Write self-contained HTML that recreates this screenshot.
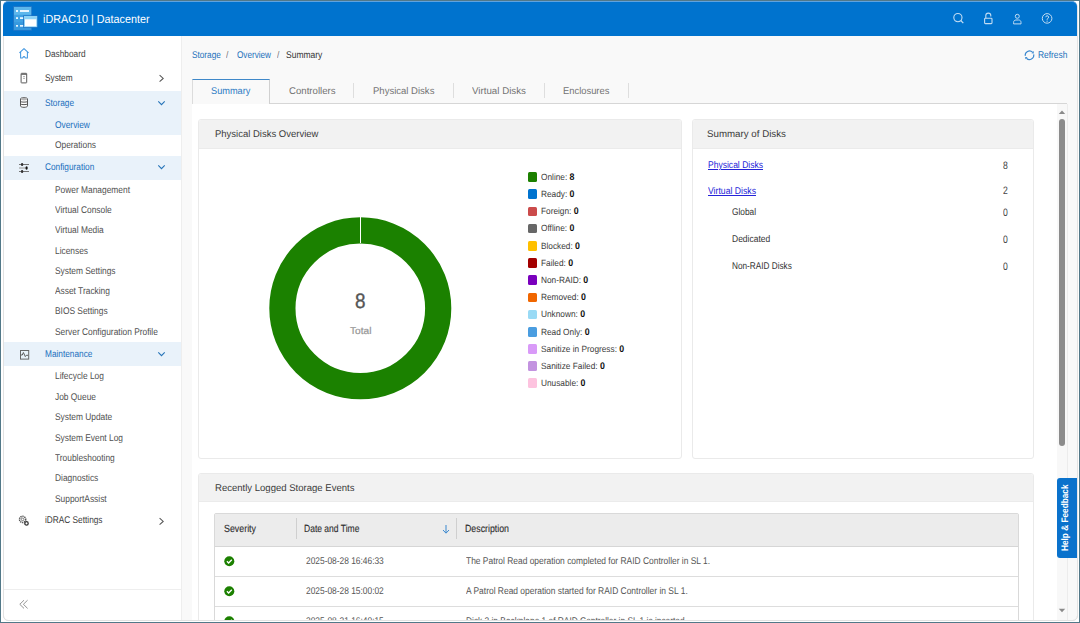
<!DOCTYPE html><html><head><meta charset="utf-8"><style>
*{margin:0;padding:0;box-sizing:border-box}
html,body{width:1080px;height:623px;overflow:hidden;background:#527888;font-family:"Liberation Sans", sans-serif;position:relative}
.a{position:absolute}
.t{position:absolute;white-space:nowrap;transform-origin:0 0;text-rendering:geometricPrecision}
</style></head><body><div class="a" style="left:1px;top:1px;width:1078px;height:621px;background:#fff;"></div>
<div class="a" style="left:0;top:0;width:1080px;height:620px;overflow:hidden">
<div class="a" style="left:3px;top:2px;width:1075px;height:619px;background:#f9f9f9;border:1px solid #e4e4e4;border-radius:5px;overflow:hidden"></div>
<div class="a" style="left:3px;top:1px;width:1074px;height:35px;background:#0073ce;border-radius:5px 5px 0 0;border-top:1px solid #5fa3df"></div>
<svg class="a" style="left:13px;top:6px" width="25" height="25" viewBox="0 0 25 25">
<rect x="0.6" y="0.6" width="18" height="23.6" fill="#3598de" stroke="#2276c6" stroke-width="0.9"/>
<rect x="1" y="1" width="17.2" height="7.9" fill="#5db7ec"/>
<rect x="1" y="8.9" width="17.2" height="7.6" fill="#3fa2e4"/>
<rect x="1" y="16.5" width="17.2" height="7.4" fill="#3699de"/>
<rect x="3" y="4" width="2" height="2" fill="#e6f5ff"/>
<rect x="7" y="4" width="9" height="2" fill="#e6f5ff"/>
<rect x="3" y="11.2" width="2" height="1.8" fill="#e6f5ff"/>
<rect x="7" y="11.2" width="4" height="1.8" fill="#e6f5ff"/>
<rect x="3" y="19" width="2" height="1.7" fill="#e6f5ff"/>
<rect x="7" y="19" width="4" height="1.7" fill="#e6f5ff"/>
<rect x="10.2" y="9.4" width="14.4" height="12.4" fill="#1f71c3"/>
<rect x="11" y="10" width="13.2" height="11.1" fill="#8ed3f6"/>
<rect x="12" y="13.3" width="11.3" height="7" fill="#ffffff"/>
</svg>
<div class="t" style="left:43.20px;top:13.71px;font-size:11.8px;line-height:11.8px;color:#fff;transform:scaleX(0.9140);font-weight:normal;">iDRAC10 | Datacenter</div>
<svg class="a" style="left:952px;top:12px" width="13" height="13" viewBox="0 0 13 13"><circle cx="5.9" cy="5.6" r="4.1" fill="none" stroke="#c2dcf3" stroke-width="1.1"/><path d="M8.8 8.5 L11.3 11.2" stroke="#c2dcf3" stroke-width="1.2"/></svg>
<svg class="a" style="left:982px;top:11px" width="12" height="14" viewBox="0 0 12 14"><rect x="2.6" y="7.2" width="7.4" height="5.4" rx="0.8" fill="none" stroke="#c2dcf3" stroke-width="1.1"/><path d="M3.8 7.2 V4.6 A2.5 2.5 0 0 1 8.8 4.6 V5.4" fill="none" stroke="#c2dcf3" stroke-width="1.1"/></svg>
<svg class="a" style="left:1011px;top:11px" width="13" height="14" viewBox="0 0 13 14"><circle cx="6.3" cy="5.3" r="2" fill="none" stroke="#c2dcf3" stroke-width="1"/><path d="M2.6 12.9 V11.4 C2.6 9.9 3.6 9 5 9 H7.6 C9 9 10 9.9 10 11.4 V12.9 Z" fill="none" stroke="#c2dcf3" stroke-width="1"/></svg>
<svg class="a" style="left:1040px;top:11px" width="14" height="14" viewBox="0 0 14 14"><circle cx="7.1" cy="7.4" r="4.8" fill="none" stroke="#c2dcf3" stroke-width="1"/><path d="M5.8 6.2 A1.4 1.4 0 1 1 7.6 7.5 C7.2 7.8 7.1 8.1 7.1 8.8" fill="none" stroke="#c2dcf3" stroke-width="1"/><circle cx="7.1" cy="10.2" r="0.6" fill="#c2dcf3"/></svg>
<div class="a" style="left:3px;top:36px;width:179px;height:585px;background:#fff;border-left:1px solid #e2e2e2;border-right:1px solid #eeeeee;border-bottom:1px solid #e4e4e4;border-radius:0 0 0 5px"></div>
<div class="a" style="left:4px;top:91px;width:177px;height:44px;background:#e9f2fa;"></div>
<div class="a" style="left:4px;top:155.5px;width:177px;height:24px;background:#e9f2fa;"></div>
<div class="a" style="left:4px;top:342px;width:177px;height:24px;background:#e9f2fa;"></div>
<div class="a" style="left:4px;top:589px;width:177px;height:1px;background:#eeeeee;"></div>
<div class="t" style="left:45.00px;top:49.60px;font-size:9.8px;line-height:9.8px;color:#3c3c3c;transform:scaleX(0.8450);font-weight:normal;">Dashboard</div>
<div class="t" style="left:45.00px;top:73.90px;font-size:9.8px;line-height:9.8px;color:#3c3c3c;transform:scaleX(0.8450);font-weight:normal;">System</div>
<div class="t" style="left:45.00px;top:98.90px;font-size:9.8px;line-height:9.8px;color:#1a6fbd;transform:scaleX(0.8450);font-weight:normal;">Storage</div>
<div class="t" style="left:55.00px;top:120.90px;font-size:9.8px;line-height:9.8px;color:#1a6fbd;transform:scaleX(0.8550);font-weight:normal;">Overview</div>
<div class="t" style="left:55.00px;top:140.90px;font-size:9.8px;line-height:9.8px;color:#505050;transform:scaleX(0.8550);font-weight:normal;">Operations</div>
<div class="t" style="left:45.00px;top:163.40px;font-size:9.8px;line-height:9.8px;color:#1a6fbd;transform:scaleX(0.8450);font-weight:normal;">Configuration</div>
<div class="t" style="left:55.00px;top:185.60px;font-size:9.8px;line-height:9.8px;color:#505050;transform:scaleX(0.8550);font-weight:normal;">Power Management</div>
<div class="t" style="left:55.00px;top:206.30px;font-size:9.8px;line-height:9.8px;color:#505050;transform:scaleX(0.8550);font-weight:normal;">Virtual Console</div>
<div class="t" style="left:55.00px;top:226.20px;font-size:9.8px;line-height:9.8px;color:#505050;transform:scaleX(0.8550);font-weight:normal;">Virtual Media</div>
<div class="t" style="left:55.00px;top:246.50px;font-size:9.8px;line-height:9.8px;color:#505050;transform:scaleX(0.8550);font-weight:normal;">Licenses</div>
<div class="t" style="left:55.00px;top:267.20px;font-size:9.8px;line-height:9.8px;color:#505050;transform:scaleX(0.8550);font-weight:normal;">System Settings</div>
<div class="t" style="left:55.00px;top:287.00px;font-size:9.8px;line-height:9.8px;color:#505050;transform:scaleX(0.8550);font-weight:normal;">Asset Tracking</div>
<div class="t" style="left:55.00px;top:307.30px;font-size:9.8px;line-height:9.8px;color:#505050;transform:scaleX(0.8550);font-weight:normal;">BIOS Settings</div>
<div class="t" style="left:55.00px;top:327.60px;font-size:9.8px;line-height:9.8px;color:#505050;transform:scaleX(0.8550);font-weight:normal;">Server Configuration Profile</div>
<div class="t" style="left:45.00px;top:349.60px;font-size:9.8px;line-height:9.8px;color:#1a6fbd;transform:scaleX(0.8450);font-weight:normal;">Maintenance</div>
<div class="t" style="left:55.00px;top:372.30px;font-size:9.8px;line-height:9.8px;color:#505050;transform:scaleX(0.8550);font-weight:normal;">Lifecycle Log</div>
<div class="t" style="left:55.00px;top:392.70px;font-size:9.8px;line-height:9.8px;color:#505050;transform:scaleX(0.8550);font-weight:normal;">Job Queue</div>
<div class="t" style="left:55.00px;top:413.00px;font-size:9.8px;line-height:9.8px;color:#505050;transform:scaleX(0.8550);font-weight:normal;">System Update</div>
<div class="t" style="left:55.00px;top:433.80px;font-size:9.8px;line-height:9.8px;color:#505050;transform:scaleX(0.8550);font-weight:normal;">System Event Log</div>
<div class="t" style="left:55.00px;top:453.90px;font-size:9.8px;line-height:9.8px;color:#505050;transform:scaleX(0.8550);font-weight:normal;">Troubleshooting</div>
<div class="t" style="left:55.00px;top:474.00px;font-size:9.8px;line-height:9.8px;color:#505050;transform:scaleX(0.8550);font-weight:normal;">Diagnostics</div>
<div class="t" style="left:55.00px;top:494.50px;font-size:9.8px;line-height:9.8px;color:#505050;transform:scaleX(0.8550);font-weight:normal;">SupportAssist</div>
<div class="t" style="left:45.00px;top:516.20px;font-size:9.8px;line-height:9.8px;color:#3c3c3c;transform:scaleX(0.8450);font-weight:normal;">iDRAC Settings</div>
<svg class="a" style="left:18px;top:47px" width="12" height="13" viewBox="0 0 12 13"><path d="M1.4 5.9 L6 1.6 L10.6 5.9 M2.6 4.9 V10.9 H4.5 C4.9 10.9 5 9.6 6 9.6 C7 9.6 7.1 10.9 7.5 10.9 H9.4 V4.9" fill="none" stroke="#4297e0" stroke-width="1.05" stroke-linejoin="round"/></svg>
<svg class="a" style="left:19px;top:72px" width="10" height="12" viewBox="0 0 10 12"><rect x="2.1" y="1.3" width="5.6" height="9.6" rx="0.5" fill="none" stroke="#5a5a5a" stroke-width="1"/><path d="M2.2 2.3 H7.6" stroke="#5a5a5a" stroke-width="1"/><path d="M4 4.6 H6 M4 6.4 H6" stroke="#9a9a9a" stroke-width="0.8"/></svg>
<svg class="a" style="left:18px;top:96px" width="12" height="13" viewBox="0 0 12 13"><path d="M2.5 2.9 C2.5 1.2 9.5 1.2 9.5 2.9 V9.9 C9.5 11.8 2.5 11.8 2.5 9.9 Z" fill="#fff" stroke="#555" stroke-width="1"/><ellipse cx="6" cy="3.1" rx="3.2" ry="1.3" fill="#b5b5b5"/><path d="M2.5 5.6 C3.5 6.3 8.5 6.3 9.5 5.6 M2.5 8.1 C3.5 8.8 8.5 8.8 9.5 8.1" fill="none" stroke="#555" stroke-width="1"/></svg>
<svg class="a" style="left:18px;top:162px" width="12" height="12" viewBox="0 0 12 12"><path d="M1 2.5 H11 M1 9.5 H11" stroke="#666" stroke-width="0.9"/><path d="M1 6 H8" stroke="#a5a5a5" stroke-width="1.2"/><rect x="3" y="1" width="2.2" height="3" rx="1" fill="#333"/><rect x="3" y="8" width="2.2" height="3" rx="1" fill="#333"/><ellipse cx="8.6" cy="6" rx="1.1" ry="1.7" fill="#111"/></svg>
<svg class="a" style="left:18px;top:348px" width="12" height="13" viewBox="0 0 12 13"><rect x="2.5" y="2.5" width="8.2" height="8.6" fill="none" stroke="#666" stroke-width="1"/><path d="M3 7 H4.3 L5.4 4.5 L7.3 8.6 L8.3 7.3 H10.2" fill="none" stroke="#555" stroke-width="0.95"/></svg>
<svg class="a" style="left:18px;top:514px" width="12" height="13" viewBox="0 0 12 13"><circle cx="4.6" cy="5.4" r="3.1" fill="none" stroke="#555" stroke-width="1.5" stroke-dasharray="1.3 0.7"/><circle cx="4.6" cy="5.4" r="1.3" fill="none" stroke="#666" stroke-width="0.85"/><circle cx="8.5" cy="9.4" r="1.7" fill="none" stroke="#333" stroke-width="1.3"/></svg>
<svg class="a" style="left:157.5px;top:74px" width="8" height="9" viewBox="0 0 8 9"><path d="M1.6 1.2 L5.2 4.4 L1.6 7.6" fill="none" stroke="#555" stroke-width="1.05"/></svg>
<svg class="a" style="left:157.5px;top:517px" width="8" height="9" viewBox="0 0 8 9"><path d="M1.6 1.2 L5.2 4.4 L1.6 7.6" fill="none" stroke="#555" stroke-width="1.05"/></svg>
<svg class="a" style="left:156.5px;top:99.5px" width="9" height="7" viewBox="0 0 9 7"><path d="M1.3 1.3 L4.5 4.6 L7.7 1.3" fill="none" stroke="#2573b8" stroke-width="1.1"/></svg>
<svg class="a" style="left:156.5px;top:164px" width="9" height="7" viewBox="0 0 9 7"><path d="M1.3 1.3 L4.5 4.6 L7.7 1.3" fill="none" stroke="#2573b8" stroke-width="1.1"/></svg>
<svg class="a" style="left:156.5px;top:350.5px" width="9" height="7" viewBox="0 0 9 7"><path d="M1.3 1.3 L4.5 4.6 L7.7 1.3" fill="none" stroke="#2573b8" stroke-width="1.1"/></svg>
<svg class="a" style="left:18px;top:599px" width="12" height="12" viewBox="0 0 12 12"><path d="M6 1.2 L1.8 5.3 L6 9.4 M9.6 1.2 L5.4 5.3 L9.6 9.4" fill="none" stroke="#888" stroke-width="0.9"/></svg>
<div class="t" style="left:191.70px;top:50.90px;font-size:9.8px;line-height:9.8px;color:#2371bb;transform:scaleX(0.8385);font-weight:normal;">Storage</div>
<div class="t" style="left:226.30px;top:50.90px;font-size:9.8px;line-height:9.8px;color:#777;transform:scaleX(0.8746);font-weight:normal;">/</div>
<div class="t" style="left:236.70px;top:50.90px;font-size:9.8px;line-height:9.8px;color:#2371bb;transform:scaleX(0.8320);font-weight:normal;">Overview</div>
<div class="t" style="left:276.70px;top:50.90px;font-size:9.8px;line-height:9.8px;color:#777;transform:scaleX(0.8746);font-weight:normal;">/</div>
<div class="t" style="left:286.30px;top:50.90px;font-size:9.8px;line-height:9.8px;color:#333;transform:scaleX(0.8678);font-weight:normal;">Summary</div>
<svg class="a" style="left:1023px;top:49px" width="13" height="13" viewBox="0 0 13 13"><path d="M2.27 6.95 A4.3 4.3 0 0 1 9.54 3.16 M10.73 5.45 A4.3 4.3 0 0 1 3.46 9.24" fill="none" stroke="#3b88cf" stroke-width="1.1"/><path d="M10.81 4.43 L10.67 2.03 L8.41 4.29 Z M2.19 7.97 L2.33 10.37 L4.59 8.11 Z" fill="#3b88cf"/></svg>
<div class="t" style="left:1037.60px;top:50.70px;font-size:9.8px;line-height:9.8px;color:#2371bb;transform:scaleX(0.8571);font-weight:normal;">Refresh</div>
<div class="a" style="left:192px;top:103px;width:875px;height:1px;background:#d6d6d6;"></div>
<div class="a" style="left:192px;top:79px;width:78px;height:25px;background:#f9f9f9;border-left:1px solid #dcdcdc;border-right:1px solid #d0d0d0;border-top:1px solid #3f88c9"></div>
<div class="t" style="left:210.60px;top:86.60px;font-size:9.8px;line-height:9.8px;color:#2d7bc4;transform:scaleX(0.9393);font-weight:normal;">Summary</div>
<div class="t" style="left:288.70px;top:86.60px;font-size:9.8px;line-height:9.8px;color:#737373;transform:scaleX(0.9835);font-weight:normal;">Controllers</div>
<div class="t" style="left:372.80px;top:86.60px;font-size:9.8px;line-height:9.8px;color:#737373;transform:scaleX(0.9721);font-weight:normal;">Physical Disks</div>
<div class="t" style="left:471.70px;top:86.60px;font-size:9.8px;line-height:9.8px;color:#737373;transform:scaleX(0.9946);font-weight:normal;">Virtual Disks</div>
<div class="t" style="left:563.30px;top:86.60px;font-size:9.8px;line-height:9.8px;color:#737373;transform:scaleX(0.9575);font-weight:normal;">Enclosures</div>
<div class="a" style="left:353px;top:83px;width:1px;height:15px;background:#dedede;"></div>
<div class="a" style="left:453px;top:83px;width:1px;height:15px;background:#dedede;"></div>
<div class="a" style="left:544px;top:83px;width:1px;height:15px;background:#dedede;"></div>
<div class="a" style="left:628px;top:83px;width:1px;height:15px;background:#dedede;"></div>
<div class="a" style="left:192px;top:104px;width:875px;height:517px;background:#ffffff;"></div>
<div class="a" style="left:1057px;top:104px;width:10px;height:517px;background:#f8f8f8;"></div>
<div class="a" style="left:1067px;top:104px;width:1px;height:517px;background:#ececec;"></div>
<svg class="a" style="left:1058px;top:109px" width="8" height="6" viewBox="0 0 8 6"><path d="M0.8 5 L4 1.6 L7.2 5 Z" fill="#8a8a8a"/></svg>
<div class="a" style="left:1059px;top:119px;width:6px;height:327px;background:#8c8c8c;border-radius:3px"></div>
<svg class="a" style="left:1058px;top:607px" width="8" height="6" viewBox="0 0 8 6"><path d="M0.8 1.8 L4 5.2 L7.2 1.8 Z" fill="#8a8a8a"/></svg>
<div class="a" style="left:198px;top:119px;width:484px;height:340px;background:#fff;border:1px solid #eaeaea;border-radius:3px;overflow:hidden"><div style="height:29px;background:#f2f2f2;border-bottom:1px solid #ebebeb"></div></div>
<div class="t" style="left:214.50px;top:129.60px;font-size:9.8px;line-height:9.8px;color:#3a3a3a;transform:scaleX(0.9694);font-weight:normal;">Physical Disks Overview</div>
<div class="a" style="left:692px;top:119px;width:342px;height:340px;background:#fff;border:1px solid #eaeaea;border-radius:3px;overflow:hidden"><div style="height:29px;background:#f2f2f2;border-bottom:1px solid #ebebeb"></div></div>
<div class="t" style="left:707.20px;top:129.60px;font-size:9.8px;line-height:9.8px;color:#3a3a3a;transform:scaleX(0.9934);font-weight:normal;">Summary of Disks</div>
<div class="a" style="left:198px;top:473px;width:836px;height:160px;background:#fff;border:1px solid #eaeaea;border-radius:3px;overflow:hidden"><div style="height:28px;background:#f2f2f2;border-bottom:1px solid #ebebeb"></div></div>
<div class="t" style="left:214.50px;top:484.00px;font-size:9.8px;line-height:9.8px;color:#3a3a3a;transform:scaleX(0.9736);font-weight:normal;">Recently Logged Storage Events</div>
<svg class="a" style="left:260px;top:208px" width="200" height="200" viewBox="0 0 200 200"><circle cx="100.3" cy="100.3" r="77.9" fill="none" stroke="#1b8100" stroke-width="26.2"/><rect x="100" y="8" width="1" height="27" fill="#fff"/></svg>
<div class="t" style="left:355.35px;top:292.29px;font-size:20.8px;line-height:20.8px;color:#555;transform:scaleX(0.9096);font-weight:normal;-webkit-text-stroke:0.35px #555">8</div>
<div class="t" style="left:349.80px;top:326.60px;font-size:9.8px;line-height:9.8px;color:#959595;transform:scaleX(1.0349);font-weight:normal;-webkit-text-stroke:0.2px #959595">Total</div>
<div class="a" style="left:527.5px;top:172.30px;width:9.6px;height:9.6px;background:#1c8000;border-radius:1.5px"></div>
<div class="t" style="left:541.20px;top:172.88px;font-size:9px;line-height:9px;color:#3a3a3a;transform:scaleX(0.9200);font-weight:normal;">Online: <b style="color:#111;font-size:9.6px">8</b></div>
<div class="a" style="left:527.5px;top:189.48px;width:9.6px;height:9.6px;background:#0073cf;border-radius:1.5px"></div>
<div class="t" style="left:541.20px;top:190.06px;font-size:9px;line-height:9px;color:#3a3a3a;transform:scaleX(0.9200);font-weight:normal;">Ready: <b style="color:#111;font-size:9.6px">0</b></div>
<div class="a" style="left:527.5px;top:206.66px;width:9.6px;height:9.6px;background:#cb4b4b;border-radius:1.5px"></div>
<div class="t" style="left:541.20px;top:207.24px;font-size:9px;line-height:9px;color:#3a3a3a;transform:scaleX(0.9200);font-weight:normal;">Foreign: <b style="color:#111;font-size:9.6px">0</b></div>
<div class="a" style="left:527.5px;top:223.84px;width:9.6px;height:9.6px;background:#676767;border-radius:1.5px"></div>
<div class="t" style="left:541.20px;top:224.42px;font-size:9px;line-height:9px;color:#3a3a3a;transform:scaleX(0.9200);font-weight:normal;">Offline: <b style="color:#111;font-size:9.6px">0</b></div>
<div class="a" style="left:527.5px;top:241.02px;width:9.6px;height:9.6px;background:#ffc000;border-radius:1.5px"></div>
<div class="t" style="left:541.20px;top:241.60px;font-size:9px;line-height:9px;color:#3a3a3a;transform:scaleX(0.9200);font-weight:normal;">Blocked: <b style="color:#111;font-size:9.6px">0</b></div>
<div class="a" style="left:527.5px;top:258.20px;width:9.6px;height:9.6px;background:#a30000;border-radius:1.5px"></div>
<div class="t" style="left:541.20px;top:258.78px;font-size:9px;line-height:9px;color:#3a3a3a;transform:scaleX(0.9200);font-weight:normal;">Failed: <b style="color:#111;font-size:9.6px">0</b></div>
<div class="a" style="left:527.5px;top:275.38px;width:9.6px;height:9.6px;background:#7a00bd;border-radius:1.5px"></div>
<div class="t" style="left:541.20px;top:275.96px;font-size:9px;line-height:9px;color:#3a3a3a;transform:scaleX(0.9200);font-weight:normal;">Non-RAID: <b style="color:#111;font-size:9.6px">0</b></div>
<div class="a" style="left:527.5px;top:292.56px;width:9.6px;height:9.6px;background:#f06600;border-radius:1.5px"></div>
<div class="t" style="left:541.20px;top:293.14px;font-size:9px;line-height:9px;color:#3a3a3a;transform:scaleX(0.9200);font-weight:normal;">Removed: <b style="color:#111;font-size:9.6px">0</b></div>
<div class="a" style="left:527.5px;top:309.74px;width:9.6px;height:9.6px;background:#99daf5;border-radius:1.5px"></div>
<div class="t" style="left:541.20px;top:310.32px;font-size:9px;line-height:9px;color:#3a3a3a;transform:scaleX(0.9200);font-weight:normal;">Unknown: <b style="color:#111;font-size:9.6px">0</b></div>
<div class="a" style="left:527.5px;top:326.92px;width:9.6px;height:9.6px;background:#4a9de0;border-radius:1.5px"></div>
<div class="t" style="left:541.20px;top:327.50px;font-size:9px;line-height:9px;color:#3a3a3a;transform:scaleX(0.9200);font-weight:normal;">Read Only: <b style="color:#111;font-size:9.6px">0</b></div>
<div class="a" style="left:527.5px;top:344.10px;width:9.6px;height:9.6px;background:#d99af8;border-radius:1.5px"></div>
<div class="t" style="left:541.20px;top:344.68px;font-size:9px;line-height:9px;color:#3a3a3a;transform:scaleX(0.9200);font-weight:normal;">Sanitize in Progress: <b style="color:#111;font-size:9.6px">0</b></div>
<div class="a" style="left:527.5px;top:361.28px;width:9.6px;height:9.6px;background:#c393e0;border-radius:1.5px"></div>
<div class="t" style="left:541.20px;top:361.86px;font-size:9px;line-height:9px;color:#3a3a3a;transform:scaleX(0.9200);font-weight:normal;">Sanitize Failed: <b style="color:#111;font-size:9.6px">0</b></div>
<div class="a" style="left:527.5px;top:378.46px;width:9.6px;height:9.6px;background:#fdc3df;border-radius:1.5px"></div>
<div class="t" style="left:541.20px;top:379.04px;font-size:9px;line-height:9px;color:#3a3a3a;transform:scaleX(0.9200);font-weight:normal;">Unusable: <b style="color:#111;font-size:9.6px">0</b></div>
<div class="t" style="left:708.00px;top:161.20px;font-size:9.8px;line-height:9.8px;color:#2323d8;transform:scaleX(0.8708);font-weight:normal;text-decoration:underline">Physical Disks</div>
<div class="t" style="left:708.00px;top:186.50px;font-size:9.8px;line-height:9.8px;color:#2323d8;transform:scaleX(0.8841);font-weight:normal;text-decoration:underline">Virtual Disks</div>
<div class="t" style="left:732.10px;top:208.30px;font-size:9.8px;line-height:9.8px;color:#333;transform:scaleX(0.8474);font-weight:normal;">Global</div>
<div class="t" style="left:732.10px;top:234.80px;font-size:9.8px;line-height:9.8px;color:#333;transform:scaleX(0.8675);font-weight:normal;">Dedicated</div>
<div class="t" style="left:732.10px;top:262.00px;font-size:9.8px;line-height:9.8px;color:#333;transform:scaleX(0.8382);font-weight:normal;">Non-RAID Disks</div>
<div class="t" style="left:1003.40px;top:160.56px;font-size:10.8px;line-height:10.8px;color:#444;transform:scaleX(0.8008);font-weight:normal;">8</div>
<div class="t" style="left:1003.40px;top:186.06px;font-size:10.8px;line-height:10.8px;color:#444;transform:scaleX(0.8008);font-weight:normal;">2</div>
<div class="t" style="left:1003.40px;top:208.16px;font-size:10.8px;line-height:10.8px;color:#444;transform:scaleX(0.8008);font-weight:normal;">0</div>
<div class="t" style="left:1003.40px;top:234.76px;font-size:10.8px;line-height:10.8px;color:#444;transform:scaleX(0.8008);font-weight:normal;">0</div>
<div class="t" style="left:1003.40px;top:261.66px;font-size:10.8px;line-height:10.8px;color:#444;transform:scaleX(0.8008);font-weight:normal;">0</div>
<div class="a" style="left:214px;top:513px;width:805px;height:120px;background:#fff;border:1px solid #d9d9d9;border-radius:2px"></div>
<div class="a" style="left:215px;top:514px;width:803px;height:33px;background:#ececec;"></div>
<div class="a" style="left:215px;top:546px;width:803px;height:1px;background:#d6d6d6;"></div>
<div class="a" style="left:215px;top:576px;width:803px;height:1px;background:#dddddd;"></div>
<div class="a" style="left:215px;top:606px;width:803px;height:1px;background:#dddddd;"></div>
<div class="a" style="left:296px;top:518px;width:1px;height:21px;background:#cfcfcf;"></div>
<div class="a" style="left:456px;top:518px;width:1px;height:21px;background:#cfcfcf;"></div>
<div class="t" style="left:223.70px;top:525.10px;font-size:10.4px;line-height:10.4px;color:#2e2e2e;transform:scaleX(0.8523);font-weight:normal;-webkit-text-stroke:0.12px #2e2e2e">Severity</div>
<div class="t" style="left:303.80px;top:525.10px;font-size:10.4px;line-height:10.4px;color:#2e2e2e;transform:scaleX(0.8204);font-weight:normal;-webkit-text-stroke:0.12px #2e2e2e">Date and Time</div>
<div class="t" style="left:464.50px;top:525.10px;font-size:10.4px;line-height:10.4px;color:#2e2e2e;transform:scaleX(0.8462);font-weight:normal;-webkit-text-stroke:0.12px #2e2e2e">Description</div>
<svg class="a" style="left:441px;top:524px" width="10" height="11" viewBox="0 0 10 11"><path d="M5 1 V9 M2 6 L5 9.2 L8 6" fill="none" stroke="#3b88cf" stroke-width="1"/></svg>
<svg class="a" style="left:224px;top:556px" width="11" height="11" viewBox="0 0 11 11"><circle cx="5.3" cy="5.2" r="5" fill="#1c8000"/><path d="M2.9 5.3 L4.6 7 L7.8 3.8" fill="none" stroke="#fff" stroke-width="1.3"/></svg>
<div class="t" style="left:305.50px;top:556.90px;font-size:9.8px;line-height:9.8px;color:#555;transform:scaleX(0.8550);font-weight:normal;">2025-08-28 16:46:33</div>
<div class="t" style="left:466.30px;top:556.90px;font-size:9.8px;line-height:9.8px;color:#555;transform:scaleX(0.8598);font-weight:normal;">The Patrol Read operation completed for RAID Controller in SL 1.</div>
<svg class="a" style="left:224px;top:586px" width="11" height="11" viewBox="0 0 11 11"><circle cx="5.3" cy="5.2" r="5" fill="#1c8000"/><path d="M2.9 5.3 L4.6 7 L7.8 3.8" fill="none" stroke="#fff" stroke-width="1.3"/></svg>
<div class="t" style="left:305.50px;top:586.90px;font-size:9.8px;line-height:9.8px;color:#555;transform:scaleX(0.8550);font-weight:normal;">2025-08-28 15:00:02</div>
<div class="t" style="left:466.30px;top:586.90px;font-size:9.8px;line-height:9.8px;color:#555;transform:scaleX(0.8602);font-weight:normal;">A Patrol Read operation started for RAID Controller in SL 1.</div>
<svg class="a" style="left:224px;top:616px" width="11" height="11" viewBox="0 0 11 11"><circle cx="5.3" cy="5.2" r="5" fill="#1c8000"/><path d="M2.9 5.3 L4.6 7 L7.8 3.8" fill="none" stroke="#fff" stroke-width="1.3"/></svg>
<div class="t" style="left:305.50px;top:616.90px;font-size:9.8px;line-height:9.8px;color:#555;transform:scaleX(0.8550);font-weight:normal;">2025-08-21 16:40:15</div>
<div class="t" style="left:466.30px;top:616.90px;font-size:9.8px;line-height:9.8px;color:#555;transform:scaleX(0.8518);font-weight:normal;">Disk 2 in Backplane 1 of RAID Controller in SL 1 is inserted.</div>
<div class="a" style="left:1057px;top:477.5px;width:20px;height:80px;background:#0a72cc;border-radius:3px 0 0 3px"></div>
<div class="t" style="left:1061px;top:551px;font-size:9.6px;line-height:10px;color:#fff;font-weight:bold;transform:rotate(-90deg) scaleX(0.86);transform-origin:0 0">Help &amp; Feedback</div>
</div>
<div class="a" style="left:3px;top:620px;width:1075px;height:1px;background:#e2e2e2;"></div>
<div class="a" style="left:1077px;top:36px;width:1px;height:585px;background:#e4e4e4;"></div>
<svg class="a" style="left:3px;top:615px" width="7" height="6" viewBox="0 0 7 6"><path d="M0 0 V1 A5 5 0 0 0 5 6 H7 V6 H0 Z" fill="#fff"/><path d="M0.5 0 V0.5 A5 5 0 0 0 5.5 5.5 H7" fill="none" stroke="#e2e2e2" stroke-width="1"/></svg>
<svg class="a" style="left:1071px;top:615px" width="7" height="6" viewBox="0 0 7 6"><path d="M7 0 V1 A5 5 0 0 1 2 6 H0 V6 H7 Z" fill="#fff"/><path d="M6.5 0 V0.5 A5 5 0 0 1 1.5 5.5 H0" fill="none" stroke="#e2e2e2" stroke-width="1"/></svg></body></html>
